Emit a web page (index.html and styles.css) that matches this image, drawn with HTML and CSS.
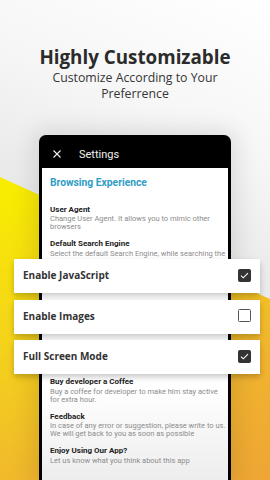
FILE: index.html
```html
<!DOCTYPE html>
<html>
<head>
<meta charset="utf-8">
<link rel="stylesheet" href="styles.css">
</head>
<body>
<div class="page">
  <header class="hero">
    <h1 class="hero-title">Highly Customizable</h1>
    <p class="hero-sub">Customize According to Your<br>Preferrence</p>
  </header>

  <div class="phone">
    <div class="appbar">
      <svg class="close" width="8" height="8" viewBox="0 0 8 8"><path d="M0.5 0.5 L7.5 7.5 M7.5 0.5 L0.5 7.5" stroke="#f2f2f2" stroke-width="1.1" fill="none"/></svg>
      <span class="appbar-title">Settings</span>
    </div>
    <div class="screen">
      <h2 class="section">Browsing Experience</h2>
      <div class="item first">
        <div class="item-title">User Agent</div>
        <div class="item-desc">Change User Agent. It allows you to mimic other<br>browsers</div>
      </div>
      <div class="item">
        <div class="item-title">Default Search Engine</div>
        <div class="item-desc">Select the default Search Engine, while searching the<br>web</div>
      </div>
      <div class="item lower">
        <div class="item-title">Buy developer a Coffee</div>
        <div class="item-desc">Buy a coffee for developer to make him stay active<br>for extra hour.</div>
      </div>
      <div class="item">
        <div class="item-title">Feedback</div>
        <div class="item-desc">In case of any error or suggestion, please write to us.<br>We will get back to you as soon as possible</div>
      </div>
      <div class="item">
        <div class="item-title">Enjoy Using Our App?</div>
        <div class="item-desc">Let us know what you think about this app</div>
      </div>
    </div>
  </div>

  <div class="cards">
    <div class="card">
      <span class="card-label">Enable JavaScript</span>
      <span class="check on"><svg width="9" height="7" viewBox="0 0 9 7"><path d="M1 3.6 L3.3 5.8 L8 1.2" stroke="#fff" stroke-width="1.1" fill="none"/></svg></span>
    </div>
    <div class="card">
      <span class="card-label">Enable Images</span>
      <span class="check"></span>
    </div>
    <div class="card">
      <span class="card-label">Full Screen Mode</span>
      <span class="check on"><svg width="9" height="7" viewBox="0 0 9 7"><path d="M1 3.6 L3.3 5.8 L8 1.2" stroke="#fff" stroke-width="1.1" fill="none"/></svg></span>
    </div>
  </div>
</div>
</body>
</html>
```

FILE: styles.css
```css
html, body {
  margin: 0;
  padding: 0;
}

body {
  width: 270px;
  height: 480px;
  overflow: hidden;
}

.page {
  position: relative;
  width: 270px;
  height: 480px;
  overflow: hidden;
  display: flex;
  flex-direction: column;
  align-items: center;
  background:
    linear-gradient(204.3deg, #ffffff 0px, #f6f6f6 150px, #e9e9e9 272px, rgba(233,233,233,0) 273px),
    linear-gradient(150deg, #f8ed00 30%, #f4d21c 55%, #f0b42e 80%, #eea535 100%);
}

.hero {
  padding-top: 45px;
  text-align: center;
  font-family: "Open Sans", sans-serif;
}

.hero-title {
  margin: 0;
  font-size: 18.8px;
  line-height: 24px;
  font-weight: 700;
  color: #2b2b2b;
}

.hero-sub {
  margin: 1px 0 0;
  font-size: 12.3px;
  line-height: 15.5px;
  color: #353535;
}

.phone {
  margin-top: 34px;
  width: 192px;
  height: 345px;
  flex: none;
  box-sizing: border-box;
  background: #000;
  border-radius: 7px 7px 0 0;
  padding: 0 3px;
  display: flex;
  flex-direction: column;
  box-shadow: 0 0 22px 6px rgba(0, 0, 0, 0.10);
  font-family: Roboto, sans-serif;
}

.appbar {
  height: 33px;
  flex: none;
  box-sizing: border-box;
  padding: 5px 0 0 11px;
  display: flex;
  align-items: center;
}

.close {
  display: block;
  margin-right: 18px;
}

.appbar-title {
  font-size: 11px;
  line-height: 13px;
  color: #f0f0f0;
}

.screen {
  flex: 1;
  background: linear-gradient(180deg, #ffffff 70%, #ededed 100%);
  padding: 8px 0 0 8px;
}

.section {
  margin: 0;
  font-size: 10.3px;
  line-height: 13px;
  font-weight: 700;
  color: #2f9dc6;
}

.item {
  margin-top: 7.5px;
}

.item.first {
  margin-top: 15.6px;
}

.item.lower {
  margin-top: 111px;
}

.item-title {
  font-size: 8px;
  line-height: 10.4px;
  font-weight: 700;
  color: #222;
}

.item-desc {
  font-size: 7.5px;
  line-height: 8.3px;
  color: #8c8c8c;
}

.cards {
  position: absolute;
  top: 259px;
  left: 14px;
  width: 246px;
  display: flex;
  flex-direction: column;
  gap: 6.5px;
}

.card {
  height: 34px;
  box-sizing: border-box;
  background: #fff;
  display: flex;
  align-items: center;
  justify-content: space-between;
  padding: 0 9px 2px 9px;
  box-shadow: 0 3px 6px rgba(0, 0, 0, 0.22);
  font-family: "Open Sans", sans-serif;
}

.card-label {
  font-size: 10px;
  line-height: 14px;
  font-weight: 700;
  color: #333;
}

.check {
  width: 13px;
  height: 13px;
  box-sizing: border-box;
  border: 1.4px solid #555;
  border-radius: 1.5px;
  background: #fff;
  display: flex;
  align-items: center;
  justify-content: center;
}

.check.on {
  background: #333;
  border-color: #333;
}
```
